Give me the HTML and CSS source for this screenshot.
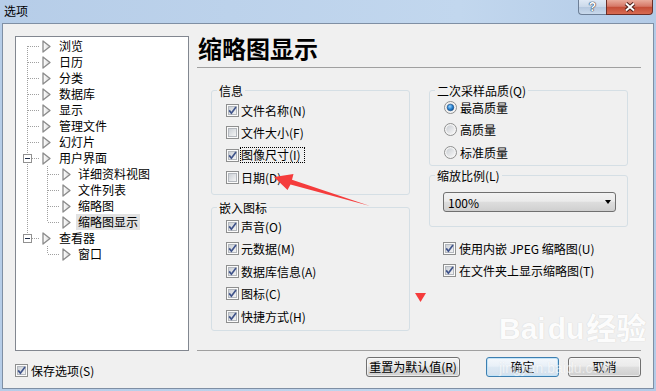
FILE: index.html
```html
<!DOCTYPE html>
<html lang="zh-CN">
<head>
<meta charset="utf-8">
<title>选项</title>
<link rel="stylesheet" href="styles.css">
</head>
<body>

<svg class="defs" width="0" height="0">
  <defs>
    <linearGradient id="g-box" x1="0" y1="0" x2="1" y2="1">
      <stop offset="0" stop-color="#c9ced4"/>
      <stop offset="1" stop-color="#f6f6f6"/>
    </linearGradient>
    <linearGradient id="g-rb" x1="0" y1="0" x2="1" y2="1">
      <stop offset="0" stop-color="#c9cdd2"/>
      <stop offset="1" stop-color="#f7f7f7"/>
    </linearGradient>
    <radialGradient id="g-dot" cx=".4" cy=".35" r=".7">
      <stop offset="0" stop-color="#9bd6ff"/>
      <stop offset=".55" stop-color="#2a84d2"/>
      <stop offset="1" stop-color="#0c4c8c"/>
    </radialGradient>
    <linearGradient id="g-tri" x1="0" y1="0" x2="1" y2="0">
      <stop offset="0" stop-color="#ffffff"/>
      <stop offset="1" stop-color="#d6d6d6"/>
    </linearGradient>
    <symbol id="cb" viewBox="0 0 13 13">
      <rect x=".5" y=".5" width="12" height="12" fill="#fbfbfb" stroke="#8e8f8f"/>
      <rect x="2.5" y="2.5" width="8" height="8" fill="url(#g-box)" stroke="#b4b8be"/>
    </symbol>
    <symbol id="cb-on" viewBox="0 0 13 13">
      <use href="#cb"/>
      <path d="M3.2 6.4 L5.4 9.2 L10 3" fill="none" stroke="#3f538a" stroke-width="1.7"/>
    </symbol>
    <symbol id="rb" viewBox="0 0 13 13">
      <circle cx="6.5" cy="6.5" r="6" fill="#f4f4f4" stroke="#8e8f8f"/>
      <circle cx="6.5" cy="6.5" r="4.2" fill="url(#g-rb)"/>
    </symbol>
    <symbol id="rb-on" viewBox="0 0 13 13">
      <use href="#rb"/>
      <circle cx="6.5" cy="6.5" r="3.3" fill="url(#g-dot)" stroke="#1b4f86" stroke-width=".6"/>
    </symbol>
    <symbol id="tri" viewBox="0 0 9 13">
      <path d="M1 1 L8 6.5 L1 12 Z" fill="url(#g-tri)" stroke="#8a8a8a" stroke-width="1.3" stroke-linejoin="round"/>
    </symbol>
  </defs>
</svg>

<div class="titlebar">
  <span class="name">选项</span>
  <div class="caps">
    <div class="cap cap-help">?</div>
    <div class="cap cap-close">
      <svg width="14" height="10" viewBox="0 0 14 10">
        <path d="M3 1.5 L11 8.5 M11 1.5 L3 8.5" stroke="#4a1e18" stroke-width="4"/>
        <path d="M3 1.5 L11 8.5 M11 1.5 L3 8.5" stroke="#fff" stroke-width="2"/>
      </svg>
    </div>
  </div>
</div>

<div class="client">
  <div class="main">

    <div class="tree">
      <div class="node">
        <svg class="twig" width="20" height="16"><path d="M5.5 8V16M6 8.5H18"/></svg>
        <svg class="tri"><use href="#tri"/></svg><span>浏览</span>
      </div>
      <div class="node">
        <svg class="twig" width="20" height="16"><path d="M5.5 0V16M6 8.5H18"/></svg>
        <svg class="tri"><use href="#tri"/></svg><span>日历</span>
      </div>
      <div class="node">
        <svg class="twig" width="20" height="16"><path d="M5.5 0V16M6 8.5H18"/></svg>
        <svg class="tri"><use href="#tri"/></svg><span>分类</span>
      </div>
      <div class="node">
        <svg class="twig" width="20" height="16"><path d="M5.5 0V16M6 8.5H18"/></svg>
        <svg class="tri"><use href="#tri"/></svg><span>数据库</span>
      </div>
      <div class="node">
        <svg class="twig" width="20" height="16"><path d="M5.5 0V16M6 8.5H18"/></svg>
        <svg class="tri"><use href="#tri"/></svg><span>显示</span>
      </div>
      <div class="node">
        <svg class="twig" width="20" height="16"><path d="M5.5 0V16M6 8.5H18"/></svg>
        <svg class="tri"><use href="#tri"/></svg><span>管理文件</span>
      </div>
      <div class="node">
        <svg class="twig" width="20" height="16"><path d="M5.5 0V16M6 8.5H18"/></svg>
        <svg class="tri"><use href="#tri"/></svg><span>幻灯片</span>
      </div>
      <div class="node">
        <svg class="twig" width="20" height="16">
          <path d="M5.5 0V16M10 8.5H18"/>
          <rect class="box" x="1.5" y="4.5" width="8" height="8"/>
          <path class="minus" d="M3 8.5H8"/>
        </svg>
        <svg class="tri"><use href="#tri"/></svg><span>用户界面</span>
      </div>
      <div class="node l2">
        <svg class="twig" width="40" height="16"><path d="M5.5 0V16M25.5 0V16M26 8.5H38"/></svg>
        <svg class="tri"><use href="#tri"/></svg><span>详细资料视图</span>
      </div>
      <div class="node l2">
        <svg class="twig" width="40" height="16"><path d="M5.5 0V16M25.5 0V16M26 8.5H38"/></svg>
        <svg class="tri"><use href="#tri"/></svg><span>文件列表</span>
      </div>
      <div class="node l2">
        <svg class="twig" width="40" height="16"><path d="M5.5 0V16M25.5 0V16M26 8.5H38"/></svg>
        <svg class="tri"><use href="#tri"/></svg><span>缩略图</span>
      </div>
      <div class="node l2">
        <svg class="twig" width="40" height="16"><path d="M5.5 0V16M25.5 0V8M26 8.5H38"/></svg>
        <svg class="tri"><use href="#tri"/></svg><span class="sel">缩略图显示</span>
      </div>
      <div class="node">
        <svg class="twig" width="20" height="16">
          <path d="M5.5 0V8M10 8.5H18"/>
          <rect class="box" x="1.5" y="4.5" width="8" height="8"/>
          <path class="minus" d="M3 8.5H8"/>
        </svg>
        <svg class="tri"><use href="#tri"/></svg><span>查看器</span>
      </div>
      <div class="node l2">
        <svg class="twig" width="40" height="16"><path d="M25.5 0V8M26 8.5H38"/></svg>
        <svg class="tri"><use href="#tri"/></svg><span>窗口</span>
      </div>
    </div>

    <div class="panel">
      <h1>缩略图显示</h1>
      <div class="rule"></div>

      <div class="cols">
        <div class="col">
          <fieldset class="group">
            <legend>信息</legend>
            <div class="opts info">
              <div class="opt"><svg class="ck"><use href="#cb-on"/></svg><span>文件名称(N)</span></div>
              <div class="opt"><svg class="ck"><use href="#cb"/></svg><span>文件大小(F)</span></div>
              <div class="opt"><svg class="ck"><use href="#cb-on"/></svg><span class="focus">图像尺寸(I)</span></div>
              <div class="opt"><svg class="ck"><use href="#cb"/></svg><span>日期(D)</span></div>
            </div>
          </fieldset>
          <fieldset class="group embed">
            <legend>嵌入图标</legend>
            <div class="opts">
              <div class="opt"><svg class="ck"><use href="#cb-on"/></svg><span>声音(O)</span></div>
              <div class="opt"><svg class="ck"><use href="#cb-on"/></svg><span>元数据(M)</span></div>
              <div class="opt"><svg class="ck"><use href="#cb-on"/></svg><span>数据库信息(A)</span></div>
              <div class="opt"><svg class="ck"><use href="#cb-on"/></svg><span>图标(C)</span></div>
              <div class="opt"><svg class="ck"><use href="#cb-on"/></svg><span>快捷方式(H)</span></div>
            </div>
          </fieldset>
        </div>

        <div class="col">
          <fieldset class="group">
            <legend>二次采样品质(Q)</legend>
            <div class="opts radios">
              <div class="opt"><svg class="ck"><use href="#rb-on"/></svg><span>最高质量</span></div>
              <div class="opt"><svg class="ck"><use href="#rb"/></svg><span>高质量</span></div>
              <div class="opt"><svg class="ck"><use href="#rb"/></svg><span>标准质量</span></div>
            </div>
          </fieldset>
          <fieldset class="group scale">
            <legend>缩放比例(L)</legend>
            <div class="combo"><span>100%</span><i class="caret"></i></div>
          </fieldset>
          <div class="opts extra">
            <div class="opt"><svg class="ck"><use href="#cb-on"/></svg><span>使用内嵌 JPEG 缩略图(U)</span></div>
            <div class="opt"><svg class="ck"><use href="#cb-on"/></svg><span>在文件夹上显示缩略图(T)</span></div>
          </div>
        </div>
      </div>

      <div class="rule bottom"></div>
    </div>
  </div>

  <div class="footer">
    <div class="opt save"><svg class="ck"><use href="#cb-on"/></svg><span>保存选项(S)</span></div>
    <div class="buttons">
      <button class="btn reset">重置为默认值(R)</button>
      <button class="btn ok">确定</button>
      <button class="btn cancel">取消</button>
    </div>
  </div>
</div>

<!-- red annotation marks drawn over the dialog -->
<svg class="marks" width="656" height="391">
  <polygon points="274,177 293.5,174 292,179.8 370,206 290.5,184.6 287.5,190" fill="#f53c3c"/>
  <polygon points="415,293 426,293 420.5,302" fill="#f53c3c"/>
</svg>

<div class="watermark">
  <div class="wm-logo">Bai<span class="wm-du">du</span>经验</div>
  <div class="wm-url">jingyan.baidu.com</div>
</div>

</body>
</html>
```

FILE: styles.css
```css
body {
    margin: 0;
    width: 656px;
    height: 391px;
    overflow: hidden;
    position: relative;
    background: linear-gradient(90deg, #b6cde8, #c2d7ee 70%, #b3cbe7);
    font-family: "Noto Sans CJK SC", "Liberation Sans", sans-serif;
    font-size: 12px;
    color: #000;
}
.defs {
    display: block;
    width: 0;
    height: 0;
}

/* title bar */
.titlebar {
    height: 23px;
    display: flex;
    align-items: flex-start;
}
.titlebar .name {
    padding-left: 4px;
    line-height: 22px;
}
.caps {
    margin-left: auto;
    margin-right: 3px;
    display: flex;
    height: 15px;
}
.cap {
    height: 15px;
    box-sizing: border-box;
    display: flex;
    align-items: center;
    justify-content: center;
}
.cap-help {
    width: 28px;
    border: 1px solid #6d7f97;
    border-top: 0;
    border-right: 0;
    border-radius: 0 0 0 4px;
    background: linear-gradient(#dfe9f5, #cbd9ea 48%, #b5c8df 52%, #c9d9ec);
    color: #fff;
    font: bold 12px "Liberation Sans", sans-serif;
    text-shadow: 0 0 1px #24354d, 0 0 1px #24354d, 0 0 1px #24354d;
}
.cap-close {
    width: 47px;
    border: 1px solid #6b2e27;
    border-top: 0;
    border-radius: 0 0 4px 0;
    background: linear-gradient(#e9ab9c, #d67867 45%, #c44d37 52%, #d86b52);
}

/* client area */
.client {
    margin: 0 2px;
    height: 366px;
    box-sizing: border-box;
    border: 1px solid #7f8fa4;
    background: #f0f0f0;
    display: flex;
    flex-direction: column;
}
.main {
    display: flex;
    padding: 12px 12px 0 12px;
}

/* tree */
.tree {
    width: 174px;
    height: 315px;
    box-sizing: border-box;
    border: 1px solid #828790;
    background: #fff;
    padding-top: 1px;
}
.node {
    display: flex;
    align-items: center;
    height: 16px;
    padding-left: 6px;
}
.twig {
    flex: none;
    display: block;
}
.twig path {
    fill: none;
    stroke: #a0a0a0;
    stroke-dasharray: 1 1;
    shape-rendering: crispEdges;
}
.twig .box {
    fill: #fff;
    stroke: #919191;
    shape-rendering: crispEdges;
}
.twig path.minus {
    stroke: #1d2a45;
    stroke-dasharray: none;
}
.tri {
    width: 9px;
    height: 13px;
    flex: none;
    display: block;
}
.node span {
    margin-left: 6px;
    padding: 0 2px;
    line-height: 16px;
    white-space: nowrap;
}
.node.l2 span {
    margin-left: 5px;
}
.node span.sel {
    background: #e2e2e2;
}

/* right panel */
.panel {
    margin-left: 7px;
    width: 445px;
    height: 315px;
    display: flex;
    flex-direction: column;
}
.panel h1 {
    margin: 0;
    padding-left: 2px;
    font-size: 24px;
    line-height: 24px;
    font-weight: bold;
}
.rule {
    border-top: 1px solid #a0a0a0;
    margin: 7px 0 0 1px;
}
.rule.bottom {
    margin-top: auto;
}
.cols {
    display: flex;
    gap: 19px;
    margin-top: 15px;
    padding-left: 15px;
}
.col {
    width: 199px;
    display: flex;
    flex-direction: column;
}
.group {
    margin: 0;
    padding: 0;
    min-width: 0;
    border: 1px solid #d5dfe5;
    border-radius: 3px;
}
.group legend {
    margin-left: 5px;
    padding: 0 2px;
    line-height: 15px;
    font-size: 12px;
}
.group.embed {
    margin-top: 5px;
}
.group.scale {
    margin-top: 2px;
    padding-bottom: 14px;
}

.opts {
    padding: 0 0 2.5px 14px;
}
.opts.info {
    padding-top: 1px;
    padding-bottom: 5px;
}
.opts.radios {
    margin-top: -2px;
    padding-bottom: 1.5px;
}
.opts.extra {
    margin-top: 10px;
    padding-bottom: 0;
}
.opt {
    display: flex;
    align-items: center;
    height: 22.5px;
    white-space: nowrap;
}
.opts.extra .opt {
    height: 22px;
}
.ck {
    width: 13px;
    height: 13px;
    flex: none;
    display: block;
}
.opt span {
    margin-left: 2px;
}
.radios .opt span,
.extra .opt span,
.save span {
    margin-left: 3px;
}
.opt span.focus {
    line-height: 14px;
    padding-right: 3px;
    outline: 1px dotted #000;
}

.combo {
    margin: 9px 0 0 13px;
    width: 173px;
    height: 20px;
    box-sizing: border-box;
    border: 1px solid #707070;
    border-radius: 3px;
    background: linear-gradient(#f2f2f2, #ebebeb 45%, #dddddd 52%, #cfcfcf);
    display: flex;
    align-items: center;
    padding-left: 4px;
}
.caret {
    margin-left: auto;
    margin-right: 4px;
    border-left: 3.5px solid transparent;
    border-right: 3.5px solid transparent;
    border-top: 4px solid #000;
}

/* footer */
.footer {
    flex: 1;
    display: flex;
    align-items: flex-start;
    padding: 0 12px;
}
.opt.save {
    margin-top: 13px;
    height: 13px;
}
.buttons {
    margin-left: auto;
    margin-top: 6px;
    display: flex;
}
.btn {
    height: 20px;
    box-sizing: border-box;
    padding: 0;
    border: 1px solid #707070;
    border-radius: 3px;
    background: linear-gradient(#f2f2f2, #ebebeb 45%, #dddddd 52%, #cfcfcf);
    box-shadow: inset 0 0 0 1px rgba(255, 255, 255, 0.55);
    font-family: "Noto Sans CJK SC", "Liberation Sans", sans-serif;
    font-size: 12px;
    line-height: 16px;
    color: #000;
}
.btn.reset {
    width: 94px;
}
.btn.ok {
    width: 73px;
    margin-left: 26px;
    border-color: #3c7fb1;
    background: linear-gradient(#f4f8fc, #e8f0f8 45%, #dce8f3 52%, #d3e1ee);
    box-shadow: inset 0 0 0 1px #c4e4f8;
}
.btn.cancel {
    width: 73px;
    margin-left: 9px;
}

/* overlays */
.marks {
    position: absolute;
    left: 0;
    top: 0;
    pointer-events: none;
}
.watermark {
    position: absolute;
    left: 499px;
    top: 311px;
    color: #fff;
    font-family: "Liberation Sans", "Noto Sans CJK SC", sans-serif;
    pointer-events: none;
}
.wm-logo {
    font-size: 30px;
    font-weight: bold;
    line-height: 36px;
    white-space: nowrap;
    text-shadow: 0 0 1px #c4c4c4;
    opacity: 0.85;
}
.wm-du {
    margin: 0 2px;
}
.wm-url {
    margin-top: 13px;
    font-size: 14px;
    line-height: 16px;
    text-shadow: 0 0 1px #d0d0d0;
    opacity: 0.55;
}
```
